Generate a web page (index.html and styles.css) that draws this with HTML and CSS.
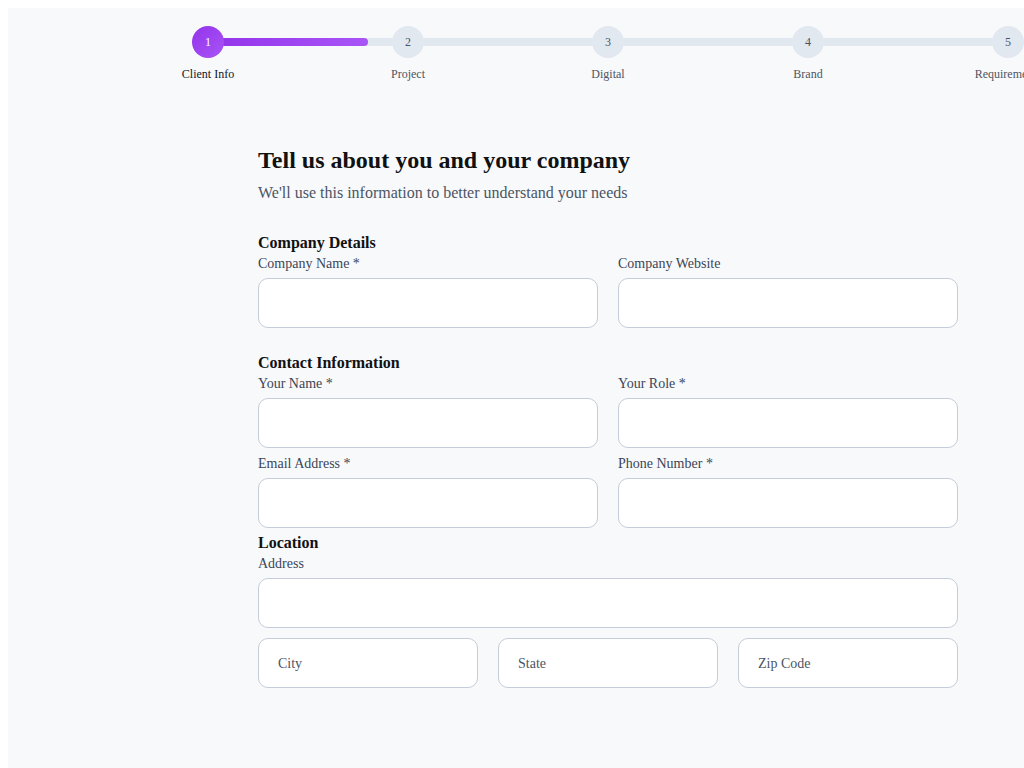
FILE: index.html
```html
<!DOCTYPE html>
<html lang="en">
<head>
<meta charset="utf-8">
<title>Client Info</title>
<link rel="stylesheet" href="styles.css">
</head>
<body>
<div class="page">
  <div class="stepper">
    <div class="track"><div class="progress"></div></div>
    <div class="step active"><div class="circle">1</div><div class="step-label">Client Info</div></div>
    <div class="step"><div class="circle">2</div><div class="step-label">Project</div></div>
    <div class="step"><div class="circle">3</div><div class="step-label">Digital</div></div>
    <div class="step"><div class="circle">4</div><div class="step-label">Brand</div></div>
    <div class="step"><div class="circle">5</div><div class="step-label">Requirements</div></div>
  </div>

  <form class="form">
    <h1 class="title">Tell us about you and your company</h1>
    <p class="subtitle">We'll use this information to better understand your needs</p>

    <section class="section section-company">
      <h2 class="section-title">Company Details</h2>
      <div class="grid two">
        <div class="field"><label class="label">Company Name *</label><input class="input" type="text"></div>
        <div class="field"><label class="label">Company Website</label><input class="input" type="text"></div>
      </div>
    </section>

    <section class="section">
      <h2 class="section-title">Contact Information</h2>
      <div class="grid two rows">
        <div class="field"><label class="label">Your Name *</label><input class="input" type="text"></div>
        <div class="field"><label class="label">Your Role *</label><input class="input" type="text"></div>
        <div class="field"><label class="label">Email Address *</label><input class="input" type="email"></div>
        <div class="field"><label class="label">Phone Number *</label><input class="input" type="tel"></div>
      </div>
    </section>

    <section class="section">
      <h2 class="section-title">Location</h2>
      <div class="field"><label class="label">Address</label><input class="input" type="text"></div>
      <div class="grid three">
        <input class="input" type="text" placeholder="City">
        <input class="input" type="text" placeholder="State">
        <input class="input" type="text" placeholder="Zip Code">
      </div>
    </section>
  </form>
</div>
</body>
</html>
```

FILE: styles.css
```css
html {
  overflow: hidden;
  background: #f8f9fb;
}

body {
  margin: 0;
  border-top: 8px solid #ffffff;
  border-left: 8px solid #ffffff;
  font-family: "Liberation Serif", "Times New Roman", serif;
}

.page {
  width: 1200px;
  min-height: 100vh;
  background: #f8f9fb;
  padding-top: 18px;
  box-sizing: border-box;
}

.stepper {
  position: relative;
  width: 1000px;
  margin: 0 auto;
  display: flex;
}

.track {
  position: absolute;
  left: 100px;
  right: 100px;
  top: 12px;
  height: 8px;
  border-radius: 4px;
  background: #e2e8f0;
}

.progress {
  width: 20%;
  height: 100%;
  border-radius: 4px;
  background: linear-gradient(90deg, #9333ea, #a855f7);
}

.step {
  width: 200px;
  display: flex;
  flex-direction: column;
  align-items: center;
  position: relative;
}

.circle {
  width: 32px;
  height: 32px;
  border-radius: 50%;
  background: #e2e8f0;
  color: #4b5563;
  font-size: 12px;
  display: flex;
  align-items: center;
  justify-content: center;
}

.step.active .circle {
  background: linear-gradient(135deg, #9333ea, #a855f7);
  color: #ffffff;
}

.step-label {
  margin-top: 9px;
  font-size: 12px;
  color: #4b5563;
  white-space: nowrap;
}

.step.active .step-label {
  color: #111827;
}

.form {
  width: 700px;
  margin: 65px auto 0;
}

.title {
  margin: 0 0 10px;
  font-size: 24px;
  font-weight: bold;
  color: #111111;
}

.subtitle {
  margin: 0 0 32px;
  font-size: 16px;
  color: #4b5563;
}

.section {
  margin: 0 0 6px;
}

.section-company {
  margin-bottom: 26px;
}

.section-title {
  margin: 0 0 4px;
  font-size: 16px;
  font-weight: bold;
  color: #111111;
}

.grid {
  display: grid;
  column-gap: 20px;
}

.grid.two {
  grid-template-columns: 1fr 1fr;
}

.grid.rows {
  row-gap: 8px;
}

.grid.three {
  grid-template-columns: 1fr 1fr 1fr;
  margin-top: 10px;
}

.field {
  display: flex;
  flex-direction: column;
}

.label {
  display: block;
  margin-bottom: 6px;
  font-size: 14px;
  color: #3b4556;
}

.input {
  box-sizing: border-box;
  width: 100%;
  height: 50px;
  padding: 2px 19px 0;
  border: 1px solid #c4cdd9;
  border-radius: 10px;
  background: #ffffff;
  font-family: "Liberation Serif", "Times New Roman", serif;
  font-size: 14px;
  color: #1f2937;
  outline: none;
}

.input::placeholder {
  color: #4b5563;
  opacity: 1;
}
```
